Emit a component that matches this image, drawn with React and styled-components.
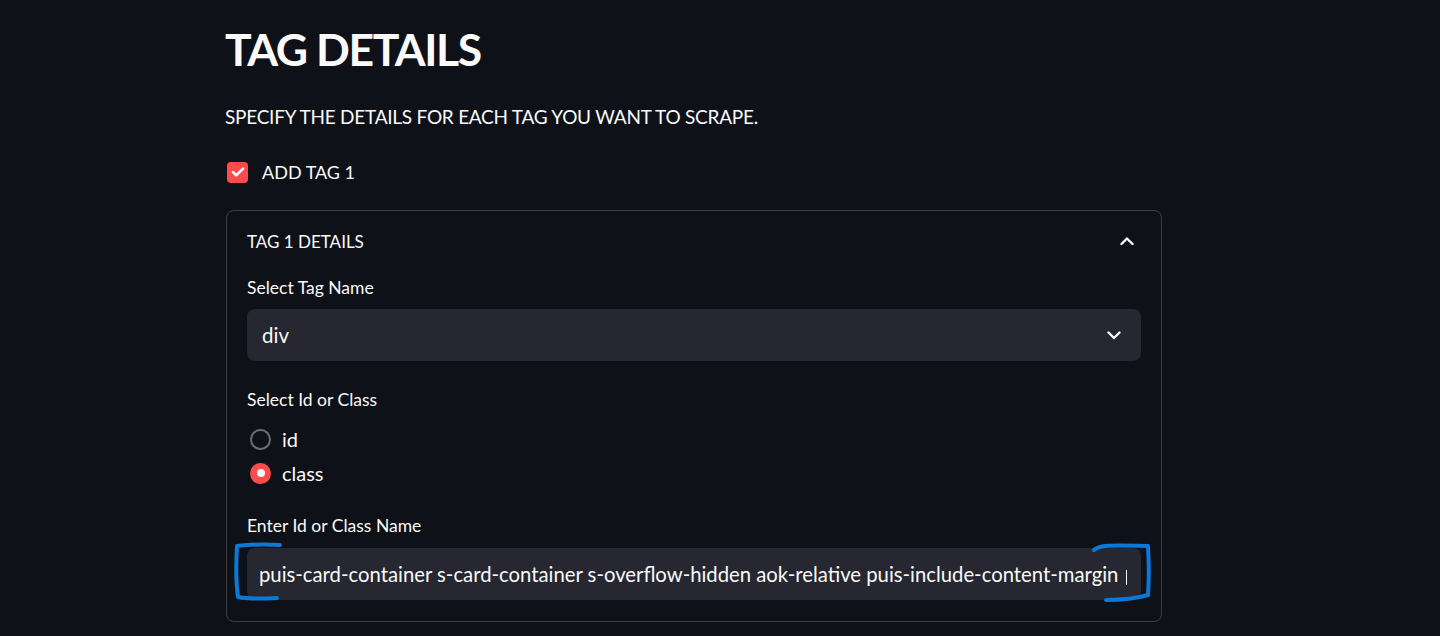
import React from "react";
import styled, { createGlobalStyle } from "styled-components";

const GlobalStyle = createGlobalStyle`
  html, body {
    margin: 0;
    background: #0e1117;
  }
  body {
    font-family: Lato, "Liberation Sans", sans-serif;
    color: #fafafa;
  }
`;

const Main = styled.main`
  width: 937px;
  padding: 20px 0 0 225px;
  box-sizing: content-box;
`;

const Title = styled.h1`
  margin: 0;
  font-size: 44.5px;
  line-height: 58px;
  font-weight: 700;
  letter-spacing: -1.4px;
`;

const Lead = styled.p`
  margin: 24px 0 0;
  font-size: 19px;
  line-height: 30px;
  letter-spacing: -0.25px;
`;

const CheckRow = styled.label`
  display: flex;
  align-items: center;
  gap: 14px;
  height: 24px;
  margin-top: 28px;
  padding-left: 2px;
  font-size: 18px;
`;

const CheckBox = styled.span`
  display: grid;
  place-items: center;
  width: 21px;
  height: 21px;
  border-radius: 4px;
  background: #ff4b4b;
`;

const Card = styled.section`
  margin-top: 26px;
  margin-left: 1px;
  border: 1px solid rgba(250, 250, 250, 0.2);
  border-radius: 8px;
  padding: 0 20px 21px;
`;

const CardHeader = styled.div`
  display: flex;
  align-items: center;
  justify-content: space-between;
  height: 60px;
  font-size: 17px;
`;

const Chevron = styled.svg`
  width: 14px;
  height: 14px;
  margin-right: ${(p) => p.$right}px;
  fill: none;
  stroke: #fafafa;
  stroke-width: 2.4;
  stroke-linecap: round;
  stroke-linejoin: round;
`;

const Label = styled.div`
  font-size: 17.5px;
  line-height: 20px;
  margin-top: ${(p) => p.$top}px;
`;

const Field = styled.div`
  position: relative;
  display: flex;
  align-items: center;
  justify-content: space-between;
  height: 52px;
  margin-top: ${(p) => p.$top}px;
  padding: 0 ${(p) => p.$padRight}px 0 ${(p) => p.$padLeft}px;
  background: #262730;
  border-radius: 8px;
  font-size: ${(p) => p.$size}px;
  white-space: nowrap;
`;

const FieldText = styled.span`
  overflow: hidden;
`;

const Caret = styled.span`
  display: inline-block;
  width: 1px;
  height: 15px;
  margin-left: 8px;
  background: #fafafa;
  vertical-align: -3px;
`;

const RadioGroup = styled.div`
  margin-top: 12px;
  padding-left: 3px;
`;

const RadioRow = styled.div`
  display: flex;
  align-items: center;
  gap: 11px;
  height: 34px;
  font-size: 20px;
`;

const RadioDot = styled.span`
  display: grid;
  place-items: center;
  width: 21px;
  height: 21px;
  box-sizing: border-box;
  border-radius: 50%;
  border: ${(p) => (p.$on ? "none" : "2px solid rgba(250, 250, 250, 0.4)")};
  background: ${(p) => (p.$on ? "#ff4b4b" : "#0e1117")};

  &::after {
    content: "";
    display: ${(p) => (p.$on ? "block" : "none")};
    width: 8px;
    height: 8px;
    border-radius: 50%;
    background: #fafafa;
  }
`;

const Marks = styled.svg`
  position: absolute;
  left: -14px;
  top: -5px;
  width: 921px;
  height: 60px;
  overflow: visible;
  pointer-events: none;
  fill: none;
  stroke: #0b79d8;
  stroke-width: 4;
  stroke-linecap: round;
  stroke-linejoin: round;
`;

const Radio = ({ on, children }) => (
  <RadioRow>
    <RadioDot $on={on} />
    {children}
  </RadioRow>
);

export default function App() {
  return (
    <>
      <GlobalStyle />
      <Main>
        <Title>TAG DETAILS</Title>
        <Lead>SPECIFY THE DETAILS FOR EACH TAG YOU WANT TO SCRAPE.</Lead>
        <CheckRow>
          <CheckBox>
            <svg width="14" height="14" viewBox="0 0 14 14" fill="none" stroke="#fff" strokeWidth="2.6" strokeLinecap="round" strokeLinejoin="round">
              <path d="M2 7.2l3.2 3.2L12 3.6" />
            </svg>
          </CheckBox>
          ADD TAG 1
        </CheckRow>

        <Card>
          <CardHeader>
            TAG 1 DETAILS
            <Chevron viewBox="0 0 14 14" $right={7}>
              <path d="M1.5 10L7 4.5 12.5 10" />
            </Chevron>
          </CardHeader>

          <Label $top={7}>Select Tag Name</Label>
          <Field $top={11} $padLeft={15} $padRight={20} $size={20.5}>
            div
            <Chevron viewBox="0 0 14 14" $right={0}>
              <path d="M1.5 4.5L7 10l5.5-5.5" />
            </Chevron>
          </Field>

          <Label $top={29}>Select Id or Class</Label>
          <RadioGroup>
            <Radio>id</Radio>
            <Radio on>class</Radio>
          </RadioGroup>

          <Label $top={26}>Enter Id or Class Name</Label>
          <Field $top={12} $padLeft={12} $padRight={12} $size={20.3}>
            <FieldText>
              puis-card-container s-card-container s-overflow-hidden aok-relative puis-include-content-margin
              <Caret />
            </FieldText>
            <Marks viewBox="0 0 921 60">
              <path d="M47 2 C30 1 12 2 4 3 C3 20 3 40 5 54 C14 56 25 56 44 55" />
              <path d="M861 7 C866 2 876 2 915 3 C916 20 916 38 915 52 C905 55 890 57 873 57" />
            </Marks>
          </Field>
        </Card>
      </Main>
    </>
  );
}
